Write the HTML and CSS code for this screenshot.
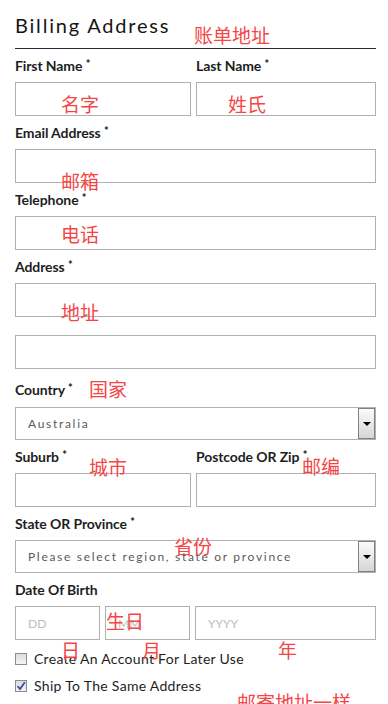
FILE: index.html
```html
<!DOCTYPE html>
<html>

<head>
  <title>Billing Address</title>
  <link rel="stylesheet" href="styles.css">
</head>

<body>
  <div class="page">
    <h1 class="title">Billing Address</h1>

    <div class="row two-col">
      <div class="field">
        <label>First Name <span class="req">*</span></label>
        <input type="text">
      </div>
      <div class="field">
        <label>Last Name <span class="req">*</span></label>
        <input type="text">
      </div>
    </div>

    <div class="field">
      <label>Email Address <span class="req">*</span></label>
      <input type="text">
    </div>

    <div class="field">
      <label>Telephone <span class="req">*</span></label>
      <input type="text">
    </div>

    <div class="field address">
      <label>Address <span class="req">*</span></label>
      <input type="text">
      <input type="text" class="second-line">
    </div>

    <div class="field country">
      <label>Country <span class="req">*</span></label>
      <div class="select">
        <select>
          <option>Australia</option>
        </select>
        <span class="select-arrow"></span>
      </div>
    </div>

    <div class="row two-col">
      <div class="field">
        <label>Suburb <span class="req">*</span></label>
        <input type="text">
      </div>
      <div class="field">
        <label>Postcode OR Zip <span class="req">*</span></label>
        <input type="text">
      </div>
    </div>

    <div class="field">
      <label>State OR Province <span class="req">*</span></label>
      <div class="select">
        <select>
          <option>Please select region, state or province</option>
        </select>
        <span class="select-arrow"></span>
      </div>
    </div>

    <div class="field">
      <label>Date Of Birth</label>
      <div class="date-row">
        <input type="text" placeholder="DD">
        <input type="text" placeholder="MM">
        <input type="text" placeholder="YYYY">
      </div>
    </div>

    <div class="checks">
      <div class="check-row">
        <span class="check"></span>
        <span>Create An Account For Later Use</span>
      </div>
      <div class="check-row">
        <span class="check checked">
          <svg width="10" height="10" viewBox="0 0 10 10">
            <path d="M1.5 5.2 L4 8 L8.8 1.2" fill="none" stroke="#3a4f9c" stroke-width="1.8" />
          </svg>
        </span>
        <span>Ship To The Same Address</span>
      </div>
    </div>

    <!-- 标注文字 -->
    <span class="note" style="left:194px;top:25px">账单地址</span>
    <span class="note" style="left:61px;top:94px">名字</span>
    <span class="note" style="left:228px;top:94px">姓氏</span>
    <span class="note" style="left:61px;top:171px">邮箱</span>
    <span class="note" style="left:61px;top:224px">电话</span>
    <span class="note" style="left:61px;top:302px">地址</span>
    <span class="note" style="left:89px;top:379px">国家</span>
    <span class="note" style="left:89px;top:457px">城市</span>
    <span class="note" style="left:302px;top:456px">邮编</span>
    <span class="note" style="left:174px;top:536px">省份</span>
    <span class="note" style="left:106px;top:611px">生日</span>
    <span class="note" style="left:61px;top:640px">日</span>
    <span class="note" style="left:142px;top:640px">月</span>
    <span class="note" style="left:278px;top:640px">年</span>
    <span class="note" style="left:237px;top:692px">邮寄地址一样</span>
  </div>
</body>

</html>
```

FILE: styles.css
```css
body,
html {
  margin: 0;
  background-color: #fff;
}

/* 页面容器 */
.page {
  position: relative;
  padding: 0 12px 0 15px;
  font-family: Lato, "Liberation Sans", sans-serif;
  color: #1e1e1e;
  height: 704px;
  overflow: hidden;
}

/* 标题 */
.title {
  margin: 0 0 9px 0;
  padding: 13px 0 11px 0;
  font-size: 20px;
  line-height: 24px;
  font-weight: 400;
  letter-spacing: 1.8px;
  color: #151515;
  border-bottom: 1px solid #2a2a38;
}

.field {
  margin-bottom: 9px;
}

.two-col {
  display: grid;
  grid-template-columns: 176px 1fr;
  column-gap: 5px;
}

.two-col .field {
  margin-bottom: 0;
}

.row {
  margin-bottom: 9px;
}

label {
  display: block;
  font-size: 14px;
  line-height: 16px;
  font-weight: 700;
  margin-bottom: 8px;
  white-space: nowrap;
  letter-spacing: -0.1px;
}

.req {
  font-size: 11px;
  font-weight: 900;
  vertical-align: top;
  line-height: 11px;
}

/* 输入框 */
input[type="text"] {
  display: block;
  box-sizing: border-box;
  width: 100%;
  height: 34px;
  margin: 0;
  padding: 0 12px;
  border: 1px solid #b0b0b0;
  border-radius: 0;
  background-color: #fff;
  font-family: Lato, "Liberation Sans", sans-serif;
  font-size: 12px;
  color: #555;
  outline: none;
}

input::placeholder {
  color: #bdbdbd;
}

.address .second-line {
  margin-top: 18px;
}

.address {
  margin-bottom: 13px;
}

.country label {
  margin-bottom: 9px;
}

.country {
  margin-bottom: 9px;
}

/* 下拉框 */
.select {
  display: flex;
  height: 33px;
  box-sizing: border-box;
  border: 1px solid #b0b0b0;
  background-color: #fff;
}

.select select {
  flex: 1;
  appearance: none;
  -webkit-appearance: none;
  border: none;
  background: transparent;
  padding: 0 12px;
  font-family: Lato, "Liberation Sans", sans-serif;
  font-size: 12px;
  letter-spacing: 1.7px;
  color: #5a5a5a;
  outline: none;
}

.select-arrow {
  width: 17px;
  box-sizing: border-box;
  border: 1px solid #808080;
  background: linear-gradient(#fbfbfb, #d6d6d6);
  display: flex;
  align-items: center;
  justify-content: center;
}

.select-arrow::after {
  content: "";
  border-left: 4px solid transparent;
  border-right: 4px solid transparent;
  border-top: 4px solid #000;
  margin-top: 1px;
}

/* 日期 */
.date-row {
  display: grid;
  grid-template-columns: 85px 85px 1fr;
  column-gap: 5px;
}

.date-row input[type="text"] {
  font-size: 12px;
}

/* 复选框 */
.checks {
  display: flex;
  flex-direction: column;
  gap: 11px;
  padding-top: 2px;
}

.check-row {
  display: flex;
  align-items: center;
  gap: 7px;
  font-size: 14px;
  line-height: 16px;
  height: 16px;
  letter-spacing: 0.3px;
}

.check {
  width: 12px;
  height: 12px;
  box-sizing: border-box;
  border: 1px solid #8c8c8c;
  background: linear-gradient(#dcdcdc, #f4f4f4);
  display: flex;
  align-items: center;
  justify-content: center;
}

/* 红色标注 */
.note {
  position: absolute;
  font-family: "Noto Sans CJK SC", sans-serif;
  font-size: 19px;
  line-height: 19px;
  color: #f54545;
  white-space: nowrap;
}
```
